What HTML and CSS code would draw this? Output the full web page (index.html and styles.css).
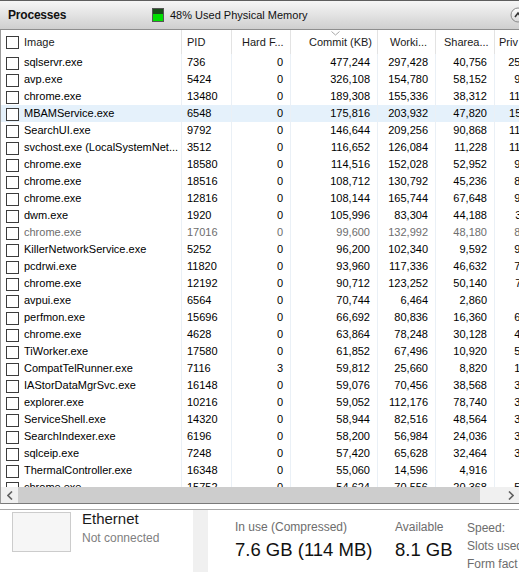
FILE: index.html
```html
<!DOCTYPE html>
<html>
<head>
<meta charset="utf-8">
<link rel="stylesheet" href="styles.css">
</head>
<body>
<div class="titlebar">
  <span class="title">Processes</span>
  <span class="mem"><span class="memicon"></span>48% Used Physical Memory</span>
  <svg class="collapse" width="16" height="16" viewBox="0 0 16 16">
    <defs><linearGradient id="cg" x1="0" y1="0" x2="0" y2="1"><stop offset="0" stop-color="#ffffff"/><stop offset="1" stop-color="#d8d8d8"/></linearGradient></defs>
    <circle cx="8" cy="8" r="7" fill="url(#cg)" stroke="#8a8a8a"/>
    <path d="M5 10 L8 6 L11 10" fill="none" stroke="#333" stroke-width="1.6"/>
  </svg>
</div>
<div class="panel">
  <div class="hdr">
    <div class="hc c-img"><span class="cb"></span>Image</div>
    <div class="hc c-pid">PID</div>
    <div class="hc c-hard">Hard F...</div>
    <div class="hc c-commit"><svg class="sort" width="9" height="5" viewBox="0 0 9 5"><path d="M0.5 0.5 L4.5 4 L8.5 0.5" fill="none" stroke="#a8a8a8"/></svg>Commit (KB)</div>
    <div class="hc c-work">Worki...</div>
    <div class="hc c-share">Sharea...</div>
    <div class="hc c-priv">Priv</div>
  </div>
  <div class="rows" id="rows"></div>
  <div class="hscroll">
    <div class="sbtn"><svg width="6" height="9" viewBox="0 0 6 9"><path d="M5 0.5 L1 4.5 L5 8.5" fill="none" stroke="#606060" stroke-width="1.6"/></svg></div>
    <div class="thumb"></div>
    <div class="track"></div>
    <div class="sbtn"><svg width="6" height="9" viewBox="0 0 6 9"><path d="M1 0.5 L5 4.5 L1 8.5" fill="none" stroke="#606060" stroke-width="1.6"/></svg></div>
  </div>
</div>
<div class="sep"></div>
<div class="bottom">
  <div class="net">
    <div class="netbox"></div>
    <div class="nettext">
      <div class="netname">Ethernet</div>
      <div class="netstat">Not connected</div>
    </div>
  </div>
  <div class="strip"></div>
  <div class="memsec">
    <div class="inuse">
      <div class="lbl">In use (Compressed)</div>
      <div class="big">7.6 GB (114 MB)</div>
    </div>
    <div class="avail">
      <div class="lbl">Available</div>
      <div class="big">8.1 GB</div>
    </div>
    <div class="specs">
      <div>Speed:</div>
      <div>Slots used</div>
      <div>Form fact</div>
    </div>
  </div>
</div>
<script src="app.js"></script>
</body>
</html>
```

FILE: app.js
```js
var data = [
["sqlservr.exe","736","0","477,244","297,428","40,756","256,672"],
["avp.exe","5424","0","326,108","154,780","58,152","96,628"],
["chrome.exe","13480","0","189,308","155,336","38,312","117,024"],
["MBAMService.exe","6548","0","175,816","203,932","47,820","156,112","sel"],
["SearchUI.exe","9792","0","146,644","209,256","90,868","118,388"],
["svchost.exe (LocalSystemNet...","3512","0","116,652","126,084","11,228","114,856"],
["chrome.exe","18580","0","114,516","152,028","52,952","99,076"],
["chrome.exe","18516","0","108,712","130,792","45,236","85,556"],
["chrome.exe","12816","0","108,144","165,744","67,648","98,096"],
["dwm.exe","1920","0","105,996","83,304","44,188","39,116"],
["chrome.exe","17016","0","99,600","132,992","48,180","84,812","dim"],
["KillerNetworkService.exe","5252","0","96,200","102,340","9,592","92,748"],
["pcdrwi.exe","11820","0","93,960","117,336","46,632","70,704"],
["chrome.exe","12192","0","90,712","123,252","50,140","73,112"],
["avpui.exe","6564","0","70,744","6,464","2,860","3,604"],
["perfmon.exe","15696","0","66,692","80,836","16,360","64,476"],
["chrome.exe","4628","0","63,864","78,248","30,128","48,120"],
["TiWorker.exe","17580","0","61,852","67,496","10,920","56,576"],
["CompatTelRunner.exe","7116","3","59,812","25,660","8,820","16,840"],
["IAStorDataMgrSvc.exe","16148","0","59,076","70,456","38,568","31,888"],
["explorer.exe","10216","0","59,052","112,176","78,740","33,436"],
["ServiceShell.exe","14320","0","58,944","82,516","48,564","33,952"],
["SearchIndexer.exe","6196","0","58,200","56,984","24,036","32,948"],
["sqlceip.exe","7248","0","57,420","65,628","32,464","33,164"],
["ThermalController.exe","16348","0","55,060","14,596","4,916","9,680"],
["chrome.exe","15752","0","54,624","70,556","20,368","50,188"]
];
var cls = ["c-img","c-pid","c-hard","c-commit","c-work","c-share","c-priv"];
var rows = document.getElementById("rows");
data.forEach(function (r) {
  var row = document.createElement("div");
  row.className = "row" + (r[7] ? " " + r[7] : "");
  for (var i = 0; i < 7; i++) {
    var c = document.createElement("div");
    c.className = "cell " + cls[i];
    if (i === 0) {
      var cb = document.createElement("span");
      cb.className = "cb";
      c.appendChild(cb);
      var t = document.createElement("span");
      t.className = "nm";
      t.textContent = r[0];
      c.appendChild(t);
    } else {
      c.textContent = r[i];
    }
    row.appendChild(c);
  }
  rows.appendChild(row);
});
```

FILE: styles.css
```css
html, body {
  margin: 0;
  padding: 0;
  background: #ffffff;
}
body {
  width: 519px;
  height: 572px;
  overflow: hidden;
  font-family: "Liberation Sans", Arial, sans-serif;
  font-size: 11px;
  color: #000;
}
.titlebar {
  height: 28px;
  border-top: 1px solid #5e5e5e;
  border-bottom: 1px solid #8e8e8e;
  background: linear-gradient(#f6f6f6, #cfcfcf);
  display: flex;
  align-items: center;
  overflow: hidden;
}
.title {
  width: 144px;
  flex: none;
  padding-left: 8px;
  font-weight: bold;
  font-size: 12px;
  letter-spacing: -0.2px;
  color: #111;
}
.mem {
  display: flex;
  align-items: center;
  font-size: 11px;
  color: #111;
}
.memicon {
  width: 10px;
  height: 12px;
  margin-right: 6px;
  border: 1px solid #555;
  background:
    radial-gradient(circle, #000 0.7px, transparent 0.9px) 0 0 / 2px 2px,
    #00e000;
  background-repeat: repeat-x, no-repeat;
  background-size: 2px 2px, auto;
  box-shadow: inset 0 5px 0 0 #1a4d1a;
}
.collapse {
  margin-left: auto;
  margin-right: -7px;
  flex: none;
}
.panel {
  border-left: 1px solid #9a9a9a;
  border-bottom: 1px solid #7a7a7a;
}
.hdr {
  display: flex;
  height: 24px;
  white-space: nowrap;
}
.hc {
  display: flex;
  align-items: center;
  box-sizing: border-box;
  border-right: 1px solid #e3e3e3;
  flex: none;
  overflow: hidden;
  color: #1a1a1a;
}
.c-img { width: 181px; padding-left: 5px; }
.c-pid { width: 50px; padding-left: 5px; }
.c-hard { width: 59px; }
.c-commit { width: 87px; }
.c-work { width: 58px; }
.c-share { width: 59px; }
.c-priv { width: 60px; border-right: none; }
.hc.c-hard { padding-left: 10px; }
.hc.c-commit { justify-content: flex-end; padding-right: 5px; position: relative; }
.hc.c-work { padding-left: 12px; }
.hc.c-share { padding-left: 8px; }
.hc.c-priv { padding-left: 4px; }
.sort {
  position: absolute;
  left: 40px;
  top: 1px;
}
.cb {
  display: inline-block;
  width: 11px;
  height: 11px;
  border: 1px solid #3c3c3c;
  background: #fff;
  margin-right: 5px;
  flex: none;
}
.rows {
  height: 433px;
  overflow: hidden;
}
.row {
  display: flex;
  height: 17px;
  line-height: 17px;
  white-space: nowrap;
}
.row.sel { background: #e5f1fb; }
.row.dim { color: #6d6d6d; }
.cell {
  box-sizing: border-box;
  flex: none;
  overflow: hidden;
  border-right: 1px solid #eaf0f6;
  text-align: right;
  padding-right: 7px;
}
.cell.c-img {
  display: flex;
  align-items: flex-start;
  text-align: left;
  padding-right: 0;
}
.cell.c-img .cb { margin-top: 3px; }
.cell.c-pid { text-align: left; padding-right: 0; }
.cell.c-priv { border-right: none; }
.hscroll {
  display: flex;
  height: 16px;
  background: #f0f0f0;
}
.sbtn {
  width: 17px;
  flex: none;
  display: flex;
  align-items: center;
  justify-content: center;
}
.thumb {
  width: 462px;
  flex: none;
  background: #cdcdcd;
}
.track { flex: 1; }
.sep {
  margin-top: 5px;
  height: 1px;
  background: #a8a8a8;
}
.bottom {
  display: flex;
  height: 62px;
}
.net {
  width: 193px;
  flex: none;
  display: flex;
  padding-left: 12px;
  box-sizing: border-box;
}
.netbox {
  width: 57px;
  height: 38px;
  margin-top: 2px;
  border: 1px solid #cccccc;
  background: #f6f6f6;
  flex: none;
}
.nettext {
  margin-left: 11px;
}
.netname {
  font-size: 15px;
  line-height: 18px;
  color: #1a1a1a;
}
.netstat {
  font-size: 12px;
  line-height: 16px;
  margin-top: 2px;
  color: #808080;
}
.strip {
  width: 15px;
  background: #f0f0f0;
  flex: none;
}
.memsec {
  display: flex;
  flex: none;
  padding-left: 27px;
}
.inuse { width: 160px; flex: none; padding-top: 9px; }
.avail { width: 72px; flex: none; padding-top: 9px; }
.lbl {
  font-size: 12px;
  line-height: 16px;
  color: #6d6d6d;
}
.big {
  font-size: 18.5px;
  line-height: 22px;
  margin-top: 4px;
  color: #111;
}
.specs {
  padding-top: 9px;
  font-size: 12px;
  line-height: 18px;
  color: #6d6d6d;
  white-space: nowrap;
}
```
